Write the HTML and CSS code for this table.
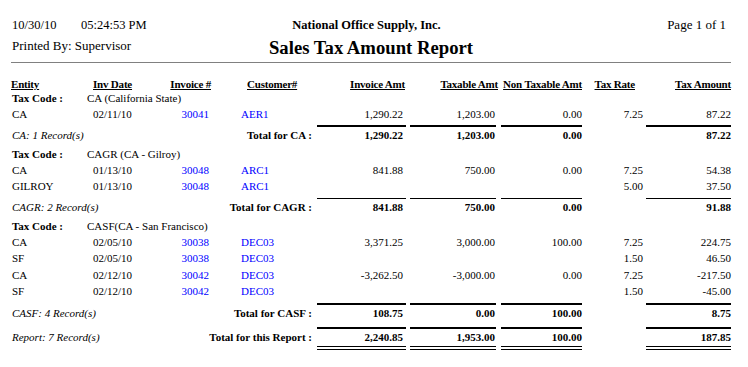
FILE: index.html
```html
<!DOCTYPE html>
<html lang="en">
<head>
<meta charset="utf-8">
<title>Sales Tax Amount Report</title>
<link rel="stylesheet" href="styles.css">
</head>
<body>
<div class="page">
  <header class="report-head">
    <div class="head-row">
      <div class="stamp"><span class="date">10/30/10</span><span class="time">05:24:53 PM</span></div>
      <div class="company">National Office Supply, Inc.</div>
      <div class="pageno">Page 1 of 1</div>
    </div>
    <div class="head-row head-row--2">
      <div class="printed">Printed By: Supervisor</div>
      <h1 class="title">Sales Tax Amount Report</h1>
      <div></div>
    </div>
  </header>
  <hr class="rule">

  <div class="cols">
    <span>Entity</span>
    <span>Inv Date</span>
    <span class="right">Invoice #</span>
    <span class="cust">Customer#</span>
    <span class="right">Invoice Amt</span>
    <span class="right">Taxable Amt</span>
    <span class="right">Non Taxable Amt</span>
    <span class="right">Tax Rate</span>
    <span class="right">Tax Amount</span>
  </div>

  <section class="group">
    <div class="taxcode"><span class="tc-label">Tax Code :</span><span>CA (California State)</span></div>
    <div class="row">
      <span>CA</span><span>02/11/10</span><span class="link">30041</span><span class="link">AER1</span>
      <span>1,290.22</span><span>1,203.00</span><span>0.00</span><span>7.25</span><span>87.22</span>
    </div>
    <div class="total total--ca">
      <span class="count">CA: 1 Record(s)</span>
      <span class="total-label">Total for CA :</span>
      <span class="amt amt--inv">1,290.22</span>
      <span class="amt amt--tax">1,203.00</span>
      <span class="amt amt--non">0.00</span>
      <span class="amt amt--due">87.22</span>
    </div>
  </section>

  <section class="group">
    <div class="taxcode"><span class="tc-label">Tax Code :</span><span>CAGR (CA - Gilroy)</span></div>
    <div class="row">
      <span>CA</span><span>01/13/10</span><span class="link">30048</span><span class="link">ARC1</span>
      <span>841.88</span><span>750.00</span><span>0.00</span><span>7.25</span><span>54.38</span>
    </div>
    <div class="row">
      <span>GILROY</span><span>01/13/10</span><span class="link">30048</span><span class="link">ARC1</span>
      <span></span><span></span><span></span><span>5.00</span><span>37.50</span>
    </div>
    <div class="total total--thin">
      <span class="count">CAGR: 2 Record(s)</span>
      <span class="total-label">Total for CAGR :</span>
      <span class="amt amt--inv">841.88</span>
      <span class="amt amt--tax">750.00</span>
      <span class="amt amt--non">0.00</span>
      <span class="amt amt--due">91.88</span>
    </div>
  </section>

  <section class="group">
    <div class="taxcode"><span class="tc-label">Tax Code :</span><span>CASF(CA - San Francisco)</span></div>
    <div class="row">
      <span>CA</span><span>02/05/10</span><span class="link">30038</span><span class="link">DEC03</span>
      <span>3,371.25</span><span>3,000.00</span><span>100.00</span><span>7.25</span><span>224.75</span>
    </div>
    <div class="row row--tall">
      <span>SF</span><span>02/05/10</span><span class="link">30038</span><span class="link">DEC03</span>
      <span></span><span></span><span></span><span>1.50</span><span>46.50</span>
    </div>
    <div class="row">
      <span>CA</span><span>02/12/10</span><span class="link">30042</span><span class="link">DEC03</span>
      <span>-3,262.50</span><span>-3,000.00</span><span>0.00</span><span>7.25</span><span>-217.50</span>
    </div>
    <div class="row row--tall">
      <span>SF</span><span>02/12/10</span><span class="link">30042</span><span class="link">DEC03</span>
      <span></span><span></span><span></span><span>1.50</span><span>-45.00</span>
    </div>
    <div class="total total--casf">
      <span class="count">CASF: 4 Record(s)</span>
      <span class="total-label">Total for CASF :</span>
      <span class="amt amt--inv">108.75</span>
      <span class="amt amt--tax">0.00</span>
      <span class="amt amt--non">100.00</span>
      <span class="amt amt--due">8.75</span>
    </div>
  </section>

  <div class="total total--grand">
    <span class="count">Report: 7 Record(s)</span>
    <span class="total-label">Total for this Report :</span>
    <span class="amt amt--inv">2,240.85</span>
    <span class="amt amt--tax">1,953.00</span>
    <span class="amt amt--non">100.00</span>
    <span class="amt amt--due">187.85</span>
  </div>
</div>
</body>
</html>
```

FILE: styles.css
```css
* {
  box-sizing: border-box;
}

body {
  margin: 0;
  background: #ffffff;
  color: #000000;
  font-family: "Liberation Serif", "Times New Roman", serif;
}

.page {
  width: 731px;
  padding: 17px 0 0 11px;
}

/* ---------- report header ---------- */
.head-row {
  display: grid;
  grid-template-columns: 1fr auto 1fr;
  align-items: start;
}

.head-row--2 {
  margin-top: 4px;
}

.stamp {
  display: flex;
  font-size: 12.5px;
  line-height: 16px;
}

.date {
  width: 70px;
  padding-left: 1px;
}

.company {
  font-size: 12.5px;
  font-weight: bold;
  line-height: 16px;
  padding-right: 9px;
}

.pageno {
  font-size: 13px;
  line-height: 16px;
  text-align: right;
  padding-right: 5px;
}

.printed {
  font-size: 13px;
  line-height: 16px;
  margin-top: 1px;
  padding-left: 1px;
}

.title {
  margin: 0;
  font-size: 18.7px;
  line-height: 22px;
  font-weight: bold;
}

.rule {
  margin: 3px 0 0;
  height: 0;
  border: 0;
  border-top: 1px solid #808080;
}

/* ---------- column headings ---------- */
.cols {
  display: grid;
  grid-template-columns: 82px 48px 70px 106px 88px 93px 84px 53px 96px;
  margin-top: 15px;
  font-size: 11px;
  line-height: 12px;
  font-weight: bold;
  text-decoration: underline;
  letter-spacing: -0.2px;
}

.cols .right {
  text-align: right;
}

.cols .cust {
  padding-left: 36px;
}

/* ---------- detail rows ---------- */
.taxcode {
  display: flex;
  font-size: 11px;
  line-height: 16px;
}

.tc-label {
  width: 76px;
  padding-left: 1px;
  font-weight: bold;
}

.row,
.total {
  display: grid;
  grid-template-columns: 82px 48px 68px 108px 89px 90px 86px 61px 88px;
  font-size: 11px;
  line-height: 16px;
}

.row--tall {
  line-height: 17px;
}

.row > :first-child {
  padding-left: 1px;
}

.row > :nth-child(3),
.row > :nth-child(n+5) {
  text-align: right;
}

.row > :nth-child(4) {
  padding-left: 32px;
}

.row > :nth-child(5) {
  padding-right: 3px;
}

.row > :nth-child(6) {
  padding-right: 1px;
}

.link {
  color: #0000ff;
}

/* ---------- totals ---------- */
.total {
  align-items: baseline;
  margin-top: 4px;
}

.total--ca {
  margin-top: 3px;
}

.total--casf {
  margin-top: 3px;
}

.group + .group {
  margin-top: 3px;
}

.count {
  grid-column: 1 / 3;
  padding-left: 1px;
  font-style: italic;
  white-space: nowrap;
}

.total-label {
  grid-column: 3 / 5;
  padding-right: 5px;
  text-align: right;
  font-weight: bold;
  white-space: nowrap;
}

.amt {
  text-align: right;
  font-weight: bold;
  border-top: 2px solid #000000;
}

.total--thin .amt {
  border-top-width: 1px;
}

.amt--inv {
  grid-column: 5;
  padding-right: 3px;
}

.amt--tax {
  grid-column: 6;
  margin-left: 4px;
  padding-right: 1px;
}

.amt--non {
  grid-column: 7;
  margin-left: 5px;
}

.amt--due {
  grid-column: 9;
  margin-left: 3px;
}

.total--grand {
  margin-top: 6px;
}

.total--grand .amt {
  padding-bottom: 1px;
  border-bottom: 4px double #000000;
}
```
